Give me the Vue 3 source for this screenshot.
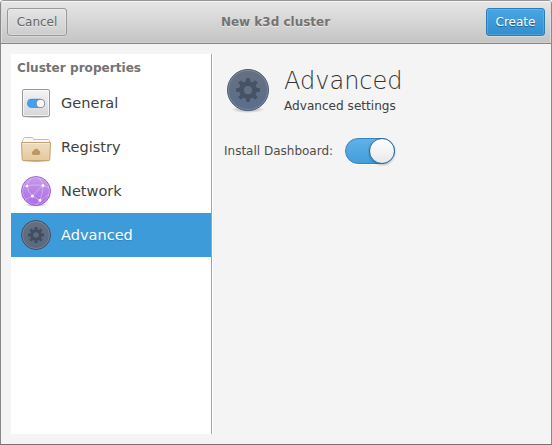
<script setup>
import { ref } from 'vue'

const active = ref('advanced')
const enabled = ref(true)
const pages = [
  { id: 'general', label: 'General' },
  { id: 'registry', label: 'Registry' },
  { id: 'network', label: 'Network' },
  { id: 'advanced', label: 'Advanced' },
]
const teeth = [0, 45, 90, 135, 180, 225, 270, 315]
</script>

<template>
  <div class="window">
    <svg class="defs" width="0" height="0">
      <defs>
        <linearGradient id="plate" x1="0" y1="0" x2="0" y2="1">
          <stop offset="0" stop-color="#f4f4f4" /><stop offset="1" stop-color="#d6d6d7" />
        </linearGradient>
        <linearGradient id="folder" x1="0" y1="0" x2="0" y2="1">
          <stop offset="0" stop-color="#eedcc0" /><stop offset="1" stop-color="#e6c99c" />
        </linearGradient>
        <linearGradient id="globe" x1="0" y1="0" x2="0" y2="1">
          <stop offset="0" stop-color="#c99bea" /><stop offset="1" stop-color="#a96be4" />
        </linearGradient>
        <linearGradient id="slate" x1="0" y1="0" x2="0" y2="1">
          <stop offset="0" stop-color="#667080" /><stop offset="1" stop-color="#5a6e8e" />
        </linearGradient>
        <linearGradient id="slateSmall" x1="0" y1="0" x2="0" y2="1">
          <stop offset="0" stop-color="#656f7d" /><stop offset="1" stop-color="#576983" />
        </linearGradient>
        <radialGradient id="shade">
          <stop offset="0" stop-color="#000" stop-opacity=".35" /><stop offset="1" stop-color="#000" stop-opacity="0" />
        </radialGradient>
      </defs>
    </svg>

    <header class="titlebar">
      <button class="btn">Cancel</button>
      <h1 class="title">New k3d cluster</h1>
      <button class="btn primary">Create</button>
    </header>

    <main class="content">
      <nav class="sidebar">
        <h2 class="group">Cluster properties</h2>
        <div
          v-for="page in pages"
          :key="page.id"
          class="row"
          :class="{ selected: page.id === active }"
          @click="active = page.id"
        >
          <svg class="icon" width="32" height="32" viewBox="0 0 32 32">
            <g v-if="page.id === 'general'">
              <ellipse cx="16" cy="30" rx="14" ry="1.3" fill="url(#shade)" />
              <rect x="2.5" y="2.5" width="27" height="27" rx="1.5" fill="url(#plate)" stroke="#98989c" />
              <rect x="3.5" y="3.5" width="25" height="25" rx="1" fill="none" stroke="#fff" stroke-opacity=".65" />
              <rect x="7" y="12" width="18" height="9" rx="4.5" fill="#459ef0" />
              <path d="M8 13.5q1-1.3 3.5-1.3h9" fill="none" stroke="#3689e6" stroke-width=".7" />
              <circle cx="20.5" cy="16.5" r="4.1" fill="#f7f7f7" stroke="#85878b" stroke-width=".8" />
            </g>
            <g v-else-if="page.id === 'registry'">
              <ellipse cx="16" cy="30.300" rx="15" ry="1.3" fill="url(#shade)" />
              <path d="M2.500 14V9.500l1-1v-1l1-1h8l1 1v1h15l1 1V14" fill="#f8f8f8" stroke="#bcbcbe" />
              <path d="M1.500 11.500h29l-.7 17q-.1 1-1 1H3.200q-.9 0-1-1z" fill="url(#folder)" stroke="#c0a375" />
              <path d="M2.500 12.500h27" stroke="#fbf3e2" stroke-opacity=".6" />
              <g fill="#b99b62">
                <circle cx="13.800" cy="21.600" r="1.800" />
                <circle cx="16.200" cy="20.200" r="2.500" />
                <circle cx="18.300" cy="21.400" r="1.900" />
                <rect x="12" y="21" width="8" height="3" rx="1.400" />
              </g>
            </g>
            <g v-else-if="page.id === 'network'">
              <ellipse cx="16" cy="30" rx="12" ry="1.8" fill="url(#shade)" />
              <circle cx="16" cy="16" r="14.500" fill="url(#globe)" stroke="#9257c6" stroke-opacity=".85" />
              <circle cx="16" cy="16" r="13.500" fill="none" stroke="#e2c5fa" stroke-opacity=".45" />
              <g fill="none" stroke="#f2e3fd" stroke-opacity=".5" stroke-width=".8">
                <path d="M7 11Q15 9 23 10.500Q18 14 12.500 21Q8 17 7 11M12.500 21l7.500 4.500Q23 18 23 10.500M7 11Q8 7 11 4M23 10.500Q22 6 19 3M7 11L3 11M23 10.500Q27 11 29 13M12.500 21Q8 23 5 25M20 25.500Q18 28 16 30M20 25.500Q26 22 29 19" />
              </g>
              <g fill="#fff">
                <circle cx="7" cy="11" r="1.350" /><circle cx="23" cy="10.500" r="1.500" />
                <circle cx="12.500" cy="21" r="1.500" /><circle cx="20" cy="25.500" r="1.400" />
              </g>
            </g>
            <g v-else>
              <circle cx="16" cy="16" r="14.500" fill="url(#slateSmall)" stroke="#414c5d" />
              <circle cx="16" cy="16" r="13.500" fill="none" stroke="#a6b1c1" stroke-opacity=".35" />
              <g fill="#424d5d">
                <rect v-for="t in teeth" :key="t" x="14.500" y="8" width="3" height="4" rx=".5" :transform="`rotate(${t} 16 16)`" />
              </g>
              <circle cx="16" cy="16" r="4.300" fill="none" stroke="#424d5d" stroke-width="3" />
            </g>
          </svg>
          <span class="label">{{ page.label }}</span>
        </div>
      </nav>

      <section class="page">
        <div class="page-head">
          <svg class="big-icon" width="48" height="48" viewBox="0 0 48 48">
            <ellipse cx="24" cy="43.500" rx="17" ry="3.500" fill="url(#shade)" />
            <circle cx="24" cy="24" r="20.500" fill="url(#slate)" stroke="#4d5a70" />
            <circle cx="24" cy="24" r="19.500" fill="none" stroke="#a5b3c9" stroke-opacity=".38" />
            <g fill="#465264">
              <rect v-for="t in teeth" :key="t" x="22" y="12" width="4" height="6" rx=".8" :transform="`rotate(${t} 24 24)`" />
            </g>
            <circle cx="24" cy="24" r="6.500" fill="none" stroke="#465264" stroke-width="5" />
            <path d="M20.300 25.500a4 4 0 0 0 7.400 0" fill="none" stroke="#8290a6" stroke-opacity=".35" stroke-width=".7" />
          </svg>
          <div>
            <h3 class="heading">Advanced</h3>
            <p class="sub">Advanced settings</p>
          </div>
        </div>
        <div class="field">
          <span>Install Dashboard:</span>
          <button class="switch" :class="{ on: enabled }" aria-label="Install Dashboard" @click="enabled = !enabled">
            <span class="knob"></span>
          </button>
        </div>
      </section>
    </main>
  </div>
</template>

<style>
body { background: #fff; }
</style>

<style scoped>
.window {
  box-sizing: border-box;
  width: 552px;
  height: 445px;
  border: 1px solid #888;
  border-top-color: #969696;
  border-bottom-color: #747474;
  border-radius: 4px 4px 0 0;
  background: #f4f4f4;
  color: #4d4d4d;
  font: 12px/16px "DejaVu Sans", sans-serif;
  overflow: hidden;
}
.defs { display: block; height: 0; }
h1, h2, h3, p { margin: 0; }
.titlebar {
  box-sizing: border-box;
  height: 43px;
  padding: 0 6px;
  display: grid;
  grid-template-columns: 1fr auto 1fr;
  align-items: center;
  background: linear-gradient(#e7e7e7, #c4c4c4);
  border-bottom: 1px solid #868686;
  box-shadow: inset 0 1px #f6f6f6, inset 1px 0 #dedede, inset -1px 0 #dedede, inset 0 -1px #cecece;
}
.title {
  padding-right: 1px;
  font-size: 12px;
  font-weight: 700;
  color: #737373;
  text-shadow: 0 1px rgba(255, 255, 255, .5);
}
.btn {
  box-sizing: border-box;
  height: 28px;
  width: 60px;
  padding: 0;
  justify-self: start;
  border: 1px solid #999;
  border-radius: 3px;
  background: linear-gradient(rgba(255, 255, 255, .12), rgba(255, 255, 255, .04));
  box-shadow: inset 0 0 0 1px rgba(255, 255, 255, .22), 0 1px rgba(255, 255, 255, .3);
  color: #666;
  font: inherit;
  text-shadow: 0 1px rgba(255, 255, 255, .5);
}
.primary {
  width: 59px;
  justify-self: end;
  border-color: #2c7db5;
  background: linear-gradient(#4aa5e2, #318fd0);
  box-shadow: inset 0 0 0 1px rgba(255, 255, 255, .15), 0 1px rgba(255, 255, 255, .3);
  color: #fff;
  text-shadow: 0 1px 1px rgba(0, 0, 0, .4);
}
.content {
  display: flex;
  height: 380px;
  padding: 10px;
}
.sidebar {
  width: 200px;
  background: #fff;
  border-right: 1px solid #a3a3a3;
  box-shadow: 1px 0 #fff;
}
.group {
  height: 21px;
  padding: 6px 6px 0;
  font-size: 12.1px;
  font-weight: 700;
  line-height: 16px;
  color: #737373;
}
.row {
  box-sizing: border-box;
  display: flex;
  align-items: center;
  gap: 9px;
  height: 44px;
  padding-left: 9px;
  font-size: 14.55px;
  color: #404040;
}
.selected { background: #3d9bda; color: #fff; text-shadow: 0 1px 1px rgba(0, 0, 0, .15); }
.icon { flex: none; }
.page { padding: 12px; }
.page-head { display: flex; gap: 12px; height: 48px; }
.big-icon { flex: none; }
.heading {
  padding-top: 1px;
  height: 31px;
  font-size: 24px;
  line-height: 28px;
  font-weight: 200;
  color: #333;
}
.sub { font-size: 12.1px; line-height: 16px; color: #404040; }
.field { display: flex; align-items: center; gap: 12px; height: 26px; margin-top: 24px; }
.switch {
  box-sizing: border-box;
  display: flex;
  width: 50px;
  height: 26px;
  padding: 0;
  border: 1px solid #3585bf;
  border-radius: 13px;
  background: linear-gradient(#60b1ea, #429edb);
  box-shadow: 0 1px #fff;
}
.on { justify-content: flex-end; }
.knob {
  box-sizing: border-box;
  width: 26px;
  height: 26px;
  margin: -1px;
  border: 1px solid #286d9d;
  border-radius: 50%;
  background: linear-gradient(#fff, #e8e8e8);
  box-shadow: 0 1px 2px rgba(0, 0, 0, .3);
}
</style>
